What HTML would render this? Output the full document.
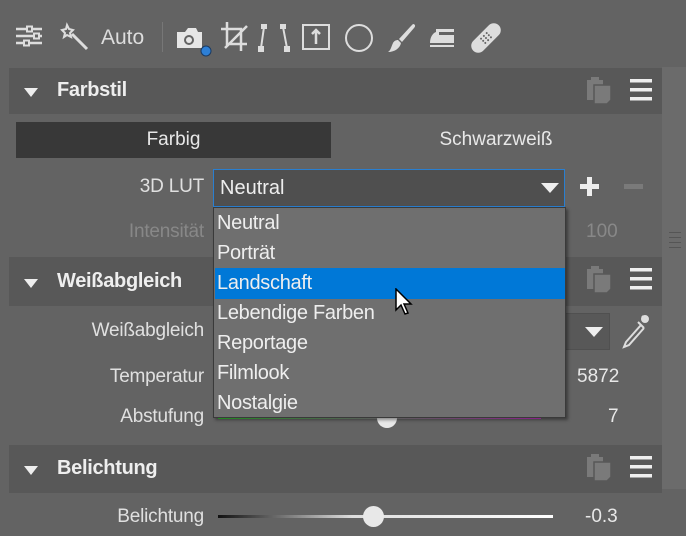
<!DOCTYPE html>
<html><head><style>
*{margin:0;padding:0;box-sizing:border-box}
body{width:686px;height:536px;background:#636363;font-family:"Liberation Sans",sans-serif;color:#e8e8e8;position:relative;overflow:hidden}
.a{position:absolute}
.hdr{position:absolute;left:9px;width:653px;background:#585858}
.hdr .t{position:absolute;left:48px;font-weight:bold;font-size:20px;color:#eee;letter-spacing:-0.3px}
.tri{position:absolute;left:24px;width:0;height:0;border-left:7px solid transparent;border-right:7px solid transparent;border-top:9px solid #eee}
.lbl{position:absolute;right:482px;font-size:19px;color:#e0e0e0;text-align:right;letter-spacing:-0.2px}
.it{position:absolute;left:3px;font-size:20px;color:#eee;letter-spacing:-0.3px}
</style></head><body>
<svg class="a" style="left:14px;top:22px" width="32" height="32" viewBox="0 0 32 32" fill="none" stroke="#ddd" stroke-width="2.4"><path d="M2 7h26M2 14h26M2 21h26"/><rect x="13" y="4.5" width="5" height="5" fill="#636363" stroke-width="2"/><rect x="20" y="11.5" width="5" height="5" fill="#636363" stroke-width="2"/><rect x="10" y="18.5" width="5" height="5" fill="#636363" stroke-width="2"/></svg>
<svg class="a" style="left:60px;top:22px" width="32" height="32" viewBox="0 0 32 32" fill="none" stroke="#ddd" stroke-width="2"><path d="M7 3l2 4 4 1-3 3 1 4-4-2-3 2 1-4-3-3 4-1z"/><path d="M12 12l15 15" stroke-width="3"/></svg>
<div class="a" style="left:101px;top:26px;font-size:21px;color:#ddd">Auto</div>
<div class="a" style="left:162px;top:22px;width:1px;height:30px;background:#777"></div>
<svg class="a" style="left:175px;top:24px" width="40" height="34" viewBox="0 0 40 34"><path d="M2 8h8l3-4h8l2 4h4v16H2z" fill="#e6e6e6"/><circle cx="14" cy="16" r="5" fill="#636363"/><circle cx="14" cy="16" r="3" fill="#e6e6e6"/><circle cx="31" cy="27" r="5" fill="#2d7fd6" stroke="#1b3a60" stroke-width="1"/></svg>
<svg class="a" style="left:219px;top:20px" width="32" height="34" viewBox="0 0 32 34" fill="none" stroke="#ddd" stroke-width="3"><path d="M8 2v22h20M2 9h20v22M6 28L28 6" stroke-width="2.5"/></svg>
<svg class="a" style="left:258px;top:24px" width="34" height="30" viewBox="0 0 34 30" fill="#ddd" stroke="#ddd" stroke-width="2"><rect x="4" y="0" width="4" height="4"/><rect x="1" y="23" width="4" height="4"/><path d="M6 3L3 24M25 3l4 21"/><rect x="23" y="0" width="4" height="4"/><rect x="27" y="23" width="4" height="4"/></svg>
<svg class="a" style="left:302px;top:24px" width="30" height="28" viewBox="0 0 30 28" fill="none" stroke="#ddd" stroke-width="2"><rect x="1" y="1" width="26" height="24"/><path d="M14 20V6M10 10l4-4 4 4" stroke-width="2.5"/></svg>
<svg class="a" style="left:344px;top:22px" width="32" height="32"><circle cx="15" cy="16" r="13" fill="none" stroke="#ddd" stroke-width="2"/></svg>
<svg class="a" style="left:384px;top:22px" width="34" height="34" viewBox="0 0 34 34" fill="#ddd"><path d="M29 2c2 0 3 2 1 4L18 20l-3-3L27 4z"/><path d="M14 18l3 3c-1 5-6 9-13 9 3-2 3-5 5-9 1-2 3-3 5-3z"/></svg>
<svg class="a" style="left:428px;top:26px" width="30" height="26" viewBox="0 0 30 26" fill="#ddd"><path d="M8 3h18v3H11v3h15v8H2c0-6 3-10 6-11z"/><rect x="2" y="19" width="24" height="2"/></svg>
<svg class="a" style="left:468px;top:20px" width="36" height="36" viewBox="0 0 36 36"><g transform="rotate(-45 18 18)"><rect x="0" y="11" width="36" height="14" rx="7" fill="#ddd"/><g fill="#636363"><circle cx="14" cy="15" r="1"/><circle cx="18" cy="15" r="1"/><circle cx="22" cy="15" r="1"/><circle cx="14" cy="18" r="1"/><circle cx="18" cy="18" r="1"/><circle cx="22" cy="18" r="1"/><circle cx="14" cy="21" r="1"/><circle cx="18" cy="21" r="1"/><circle cx="22" cy="21" r="1"/></g></g></svg>
<div class="a" style="left:662px;top:67px;width:24px;height:422px;background:#6b6b6b"></div>
<div class="a" style="left:669px;top:232px;width:12px;height:1px;background:#555;box-shadow:0 5px #555,0 10px #555,0 15px #555"></div>
<div class="hdr" style="top:68px;height:46px"><div class="tri" style="left:15px;top:20px"></div><div class="t" style="top:11px">Farbstil</div></div>
<div class="a" style="left:16px;top:122px;width:315px;height:36px;background:#383838"></div>
<div class="a" style="left:16px;top:129px;width:315px;text-align:center;font-size:19px;color:#e8e8e8">Farbig</div>
<div class="a" style="left:331px;top:129px;width:330px;text-align:center;font-size:19px;color:#e8e8e8">Schwarzweiß</div>
<div class="lbl" style="top:176px">3D LUT</div>
<div class="a" style="left:213px;top:169px;width:352px;height:38px;background:#4f4f4f;border:1px solid #2a7fd0"></div>
<div class="a" style="left:220px;top:177px;font-size:20px;color:#eee">Neutral</div>
<div class="a" style="left:541px;top:183px;border-left:9px solid transparent;border-right:9px solid transparent;border-top:10px solid #eee"></div>
<div class="a" style="left:580px;top:184px;width:19px;height:5px;background:#eee"></div><div class="a" style="left:587px;top:177px;width:5px;height:19px;background:#eee"></div>
<div class="a" style="left:624px;top:184px;width:19px;height:5px;background:#7a7a7a"></div>
<div class="lbl" style="top:221px;color:#888">Intensität</div>
<div class="a" style="left:586px;top:221px;font-size:19px;color:#888">100</div>
<svg class="a" style="left:585px;top:76px" width="72" height="30" viewBox="0 0 72 30"><g fill="#7a7a7a"><rect x="2" y="4" width="16" height="20"/><rect x="6" y="1" width="8" height="5"/></g><path d="M9 9h17v15l-4 4H9z" fill="#7a7a7a" stroke="#585858" stroke-width="1.5"/><g fill="#eee"><rect x="45" y="3" width="22" height="3.5"/><rect x="45" y="12" width="22" height="3.5"/><rect x="45" y="21" width="22" height="3.5"/></g></svg>
<div class="hdr" style="top:257px;height:49px"><div class="tri" style="left:15px;top:22px"></div><div class="t" style="top:13px">Weißabgleich</div></div>
<svg class="a" style="left:585px;top:265px" width="72" height="30" viewBox="0 0 72 30"><g fill="#7a7a7a"><rect x="2" y="4" width="16" height="20"/><rect x="6" y="1" width="8" height="5"/></g><path d="M9 9h17v15l-4 4H9z" fill="#7a7a7a" stroke="#585858" stroke-width="1.5"/><g fill="#eee"><rect x="45" y="3" width="22" height="3.5"/><rect x="45" y="12" width="22" height="3.5"/><rect x="45" y="21" width="22" height="3.5"/></g></svg>
<div class="lbl" style="top:320px">Weißabgleich</div>
<div class="a" style="left:560px;top:313px;width:50px;height:37px;background:#585858;border:1px solid #505050"></div>
<div class="a" style="left:585px;top:327px;border-left:9px solid transparent;border-right:9px solid transparent;border-top:10px solid #eee"></div>
<svg class="a" style="left:620px;top:312px" width="30" height="40" viewBox="0 0 30 40" fill="none" stroke="#ddd" stroke-width="2"><path d="M22 4l5 5M18 10l6 6M21 13L6 30l-2 5 5-2 15-17"/><circle cx="25" cy="7" r="3" fill="#ddd"/></svg>
<div class="lbl" style="top:366px">Temperatur</div>
<div class="a" style="left:577px;top:366px;font-size:19px">5872</div>
<div class="lbl" style="top:406px">Abstufung</div>
<div class="a" style="left:608px;top:406px;font-size:19px">7</div>
<div class="a" style="left:218px;top:417px;width:160px;height:2px;background:linear-gradient(90deg,#3c3,#888)"></div>
<div class="a" style="left:395px;top:417px;width:146px;height:2px;background:linear-gradient(90deg,#888,#c3c)"></div>
<div class="a" style="left:377px;top:408px;width:20px;height:20px;border-radius:50%;background:#e8e8e8"></div>
<div class="hdr" style="top:445px;height:48px"><div class="tri" style="left:15px;top:21px"></div><div class="t" style="top:12px">Belichtung</div></div>
<svg class="a" style="left:585px;top:453px" width="72" height="30" viewBox="0 0 72 30"><g fill="#7a7a7a"><rect x="2" y="4" width="16" height="20"/><rect x="6" y="1" width="8" height="5"/></g><path d="M9 9h17v15l-4 4H9z" fill="#7a7a7a" stroke="#585858" stroke-width="1.5"/><g fill="#eee"><rect x="45" y="3" width="22" height="3.5"/><rect x="45" y="12" width="22" height="3.5"/><rect x="45" y="21" width="22" height="3.5"/></g></svg>
<div class="lbl" style="top:506px">Belichtung</div>
<div class="a" style="left:218px;top:515px;width:335px;height:3px;background:linear-gradient(90deg,#111,#ddd 40%,#fff)"></div>
<div class="a" style="left:363px;top:506px;width:21px;height:21px;border-radius:50%;background:#e8e8e8"></div>
<div class="a" style="left:585px;top:506px;font-size:19px">-0.3</div>
<div class="a" style="left:213px;top:207px;width:353px;height:211px;background:#6f6f6f;border:1px solid #3a3a3a;box-shadow:2px 2px 3px rgba(0,0,0,.4)">
<div class="it" style="top:4px">Neutral</div>
<div class="it" style="top:34px">Porträt</div>
<div class="a" style="left:1px;top:60px;width:350px;height:31px;background:#0078d7"></div>
<div class="it" style="top:64px">Landschaft</div>
<div class="it" style="top:94px">Lebendige Farben</div>
<div class="it" style="top:124px">Reportage</div>
<div class="it" style="top:154px">Filmlook</div>
<div class="it" style="top:184px">Nostalgie</div>
</div>
<svg class="a" style="left:395px;top:288px" width="20" height="30" viewBox="0 0 20 30"><path d="M1 1v21l5-5 4 9 3-1-4-9h7z" fill="#fff" stroke="#000" stroke-width="1.5"/></svg>
</body></html>
